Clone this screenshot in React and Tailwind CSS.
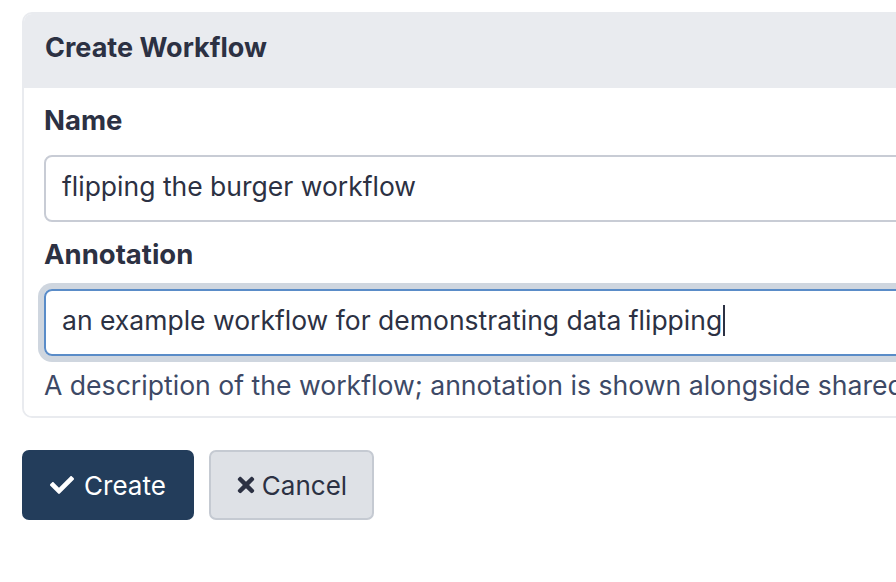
import { FaCheck, FaTimes } from "react-icons/fa";

/* ── Form field wrapper ── */
function Field({ label, children }) {
  return (
    <div className="flex flex-col">
      <label className="h-[40px] leading-[44px] text-[27.5px] font-bold text-[#2c3143]">{label}</label>
      {children}
    </div>
  );
}

export default function App() {
  return (
    <div
      className="min-h-screen w-[896px] overflow-hidden bg-white pt-[12px] pl-[22px]"
      style={{ fontFamily: "Inter, 'Noto Sans', sans-serif" }}
    >
      {/* Card */}
      <div className="w-[920px] rounded-l-[10px] border-2 border-r-0 border-[#e9ebef] overflow-hidden">
        <div className="h-[74px] bg-[#e9ebef] px-[21px] pb-[6px] flex items-center">
          <h2 className="text-[27px] font-bold text-[#2c3143]">Create Workflow</h2>
        </div>

        <div className="bg-white pl-[20px] pt-[10px] pb-[14px]">
          <Field label="Name">
            <div className="mt-[17px] h-[67px] rounded-[8px] border-2 border-[#c8ccd5] flex items-center pl-[16px] pb-[4px] text-[26.5px] text-[#2c3143]">
              flipping the burger workflow
            </div>
          </Field>

          <div className="mt-[10px]">
            <Field label="Annotation">
              <div className="mt-[17px] h-[67px] rounded-[8px] border-2 border-[#5a8cc8] ring-[6px] ring-[#cfd6df] flex items-center pl-[16px] pb-[4px] text-[26.5px] text-[#2c3143]">
                an example workflow for demonstrating data flipping
                <span className="inline-block w-[2px] h-[31px] bg-[#2c3143] ml-[1px]" />
              </div>
            </Field>
          </div>

          <p className="mt-[6px] h-[40px] leading-[46px] text-[26.6px] text-[#3d4966] whitespace-nowrap">
            A description of the workflow; annotation is shown alongside shared
          </p>
        </div>
      </div>

      {/* Buttons */}
      <div className="mt-[32px] flex gap-[15px]">
        <button className="w-[172px] h-[70px] rounded-[7px] bg-[#233d5b] text-white text-[26px] flex items-center justify-center gap-[10px]">
          <FaCheck className="w-[24px] h-[24px]" />
          Create
        </button>
        <button className="w-[165px] h-[70px] rounded-[7px] bg-[#dee1e6] border-2 border-[#c5cad2] text-[#2c3143] text-[26px] flex items-center justify-center gap-[6px]">
          <FaTimes className="w-[20px] h-[24px]" />
          Cancel
        </button>
      </div>
    </div>
  );
}
